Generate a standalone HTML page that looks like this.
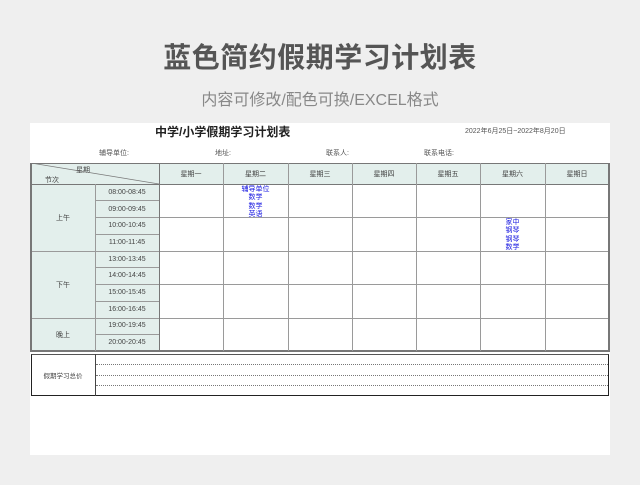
<!DOCTYPE html>
<html><head><meta charset="utf-8"><style>
*{margin:0;padding:0;box-sizing:border-box}
body{width:640px;height:485px;background:#efefef;position:relative;overflow:hidden;font-family:"Liberation Sans","Noto Sans CJK SC",sans-serif}
.a{position:absolute}
.t{white-space:nowrap;color:#333}
.c{text-align:center;display:flex;align-items:center;justify-content:center;font-size:7px;color:#444}
.h{position:absolute;height:1px;background:#9a9a9a}
.v{position:absolute;width:1px;background:#9a9a9a}
.b{color:#1515e0;font-size:7px;line-height:8.4px;text-align:center}
.dot{position:absolute;left:96px;width:512px;border-top:1px dotted #777}
</style></head><body>
<div class="a t" style="left:0;width:640px;top:36px;text-align:center;font-size:28px;color:#555;letter-spacing:0.5px;font-weight:bold">蓝色简约假期学习计划表</div>
<div class="a t" style="left:0;width:640px;top:86px;text-align:center;font-size:16px;color:#888">内容可修改/配色可换/EXCEL格式</div>

<div class="a" style="left:30px;top:123px;width:580px;height:332px;background:#fff"></div>
<div class="a t" style="left:155px;top:123px;font-size:12px;font-weight:bold;color:#222">中学/小学假期学习计划表</div>
<div class="a t" style="left:465px;top:126px;font-size:7px;color:#555">2022年6月25日~2022年8月20日</div>
<div class="a t" style="left:99px;top:148px;font-size:7px;color:#555">辅导单位:</div>
<div class="a t" style="left:215px;top:148px;font-size:7px;color:#555">地址:</div>
<div class="a t" style="left:326px;top:148px;font-size:7px;color:#555">联系人:</div>
<div class="a t" style="left:424px;top:148px;font-size:7px;color:#555">联系电话:</div>

<div class="a" style="left:31px;top:163px;width:578px;height:21px;background:#e3efec"></div>
<div class="a" style="left:31px;top:184px;width:128px;height:167px;background:#e3efec"></div>

<div class="a t" style="left:76px;top:165px;font-size:7px;color:#444">星期</div>
<div class="a t" style="left:45px;top:175px;font-size:7px;color:#444">节次</div>
<svg class="a" style="left:31px;top:163px" width="128" height="21"><line x1="0" y1="0" x2="128" y2="21" stroke="#777" stroke-width="0.7"/></svg>
<div class="a c" style="left:159px;top:163px;width:64px;height:21px">星期一</div>
<div class="a c" style="left:223px;top:163px;width:65px;height:21px">星期二</div>
<div class="a c" style="left:288px;top:163px;width:64px;height:21px">星期三</div>
<div class="a c" style="left:352px;top:163px;width:64px;height:21px">星期四</div>
<div class="a c" style="left:416px;top:163px;width:64px;height:21px">星期五</div>
<div class="a c" style="left:480px;top:163px;width:65px;height:21px">星期六</div>
<div class="a c" style="left:545px;top:163px;width:64px;height:21px">星期日</div>

<div class="a c" style="left:31px;top:184px;width:64px;height:67px">上午</div>
<div class="a c" style="left:31px;top:251px;width:64px;height:67px">下午</div>
<div class="a c" style="left:31px;top:318px;width:64px;height:33px">晚上</div>
<div class="a c" style="left:95px;top:184px;width:64px;height:16.7px">08:00-08:45</div>
<div class="a c" style="left:95px;top:200.7px;width:64px;height:16.7px">09:00-09:45</div>
<div class="a c" style="left:95px;top:217.4px;width:64px;height:16.7px">10:00-10:45</div>
<div class="a c" style="left:95px;top:234.1px;width:64px;height:16.7px">11:00-11:45</div>
<div class="a c" style="left:95px;top:250.8px;width:64px;height:16.7px">13:00-13:45</div>
<div class="a c" style="left:95px;top:267.5px;width:64px;height:16.7px">14:00-14:45</div>
<div class="a c" style="left:95px;top:284.2px;width:64px;height:16.7px">15:00-15:45</div>
<div class="a c" style="left:95px;top:300.9px;width:64px;height:16.7px">16:00-16:45</div>
<div class="a c" style="left:95px;top:317.6px;width:64px;height:16.7px">19:00-19:45</div>
<div class="a c" style="left:95px;top:334.3px;width:64px;height:16.7px">20:00-20:45</div>

<div class="a b" style="left:223px;top:186px;width:65px">辅导单位<br>数学<br>数学<br>英语</div>
<div class="a b" style="left:480px;top:219px;width:65px">家中<br>钢琴<br>钢琴<br>数学</div>

<div class="h" style="left:31px;top:163px;width:578px;background:#777"></div>
<div class="h" style="left:31px;top:184px;width:578px;background:#777"></div>
<div class="h" style="left:95px;top:200px;width:64px"></div>
<div class="h" style="left:95px;top:217px;width:514px"></div>
<div class="h" style="left:95px;top:234px;width:64px"></div>
<div class="h" style="left:31px;top:251px;width:578px"></div>
<div class="h" style="left:95px;top:267px;width:64px"></div>
<div class="h" style="left:95px;top:284px;width:514px"></div>
<div class="h" style="left:95px;top:301px;width:64px"></div>
<div class="h" style="left:31px;top:318px;width:578px"></div>
<div class="h" style="left:95px;top:334px;width:64px"></div>
<div class="h" style="left:31px;top:350px;width:578px;height:2px;background:#777"></div>
<div class="v" style="left:30px;top:163px;height:189px;width:2px;background:#777"></div>
<div class="v" style="left:95px;top:184px;height:167px"></div>
<div class="v" style="left:159px;top:163px;height:188px;background:#777"></div>
<div class="v" style="left:223px;top:163px;height:188px"></div>
<div class="v" style="left:288px;top:163px;height:188px"></div>
<div class="v" style="left:352px;top:163px;height:188px"></div>
<div class="v" style="left:416px;top:163px;height:188px"></div>
<div class="v" style="left:480px;top:163px;height:188px"></div>
<div class="v" style="left:545px;top:163px;height:188px"></div>
<div class="v" style="left:608px;top:163px;height:189px;width:2px;background:#777"></div>

<div class="a" style="left:31px;top:354px;width:578px;height:42px;border:1px solid #222;border-top:1.5px solid #555"></div>
<div class="v" style="left:95px;top:354px;height:42px;background:#444"></div>
<div class="a c" style="left:31px;top:354px;width:64px;height:42px;font-size:6.5px">假期学习总价</div>
<div class="dot" style="top:364px"></div>
<div class="dot" style="top:375px"></div>
<div class="dot" style="top:385px"></div>
</body></html>
